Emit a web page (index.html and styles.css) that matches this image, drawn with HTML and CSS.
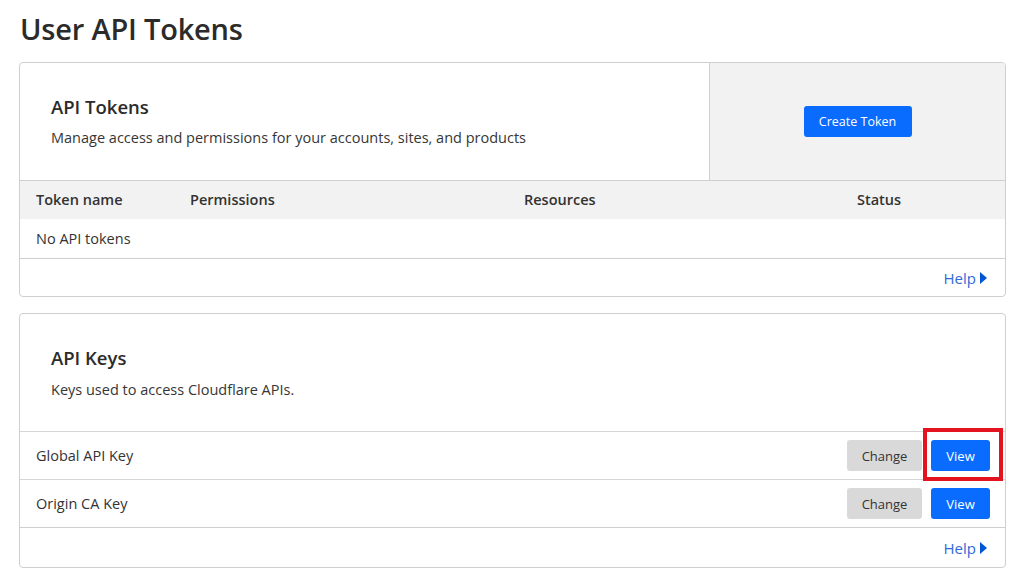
FILE: index.html
```html
<!DOCTYPE html>
<html lang="en">
<head>
<meta charset="utf-8">
<title>User API Tokens</title>
<link rel="stylesheet" href="styles.css">
</head>
<body>
<main class="page">
  <h1 class="page-title">User API Tokens</h1>

  <section class="card">
    <div class="card-top">
      <div class="card-intro">
        <h2 class="card-title">API Tokens</h2>
        <p class="card-desc">Manage access and permissions for your accounts, sites, and products</p>
      </div>
      <div class="card-action">
        <button class="btn btn-primary btn-create">Create Token</button>
      </div>
    </div>
    <div class="table-head">
      <span>Token name</span>
      <span>Permissions</span>
      <span>Resources</span>
      <span>Status</span>
    </div>
    <div class="table-empty">No API tokens</div>
    <div class="card-foot">
      <a class="help-link" href="#">Help<svg class="help-arrow" width="7" height="12" viewBox="0 0 7 12"><path d="M0 0 L7 6 L0 12 Z" fill="#0055d4"/></svg></a>
    </div>
  </section>

  <section class="card card-keys">
    <div class="card-top">
      <div class="card-intro">
        <h2 class="card-title">API Keys</h2>
        <p class="card-desc">Keys used to access Cloudflare APIs.</p>
      </div>
    </div>
    <div class="key-row">
      <span class="key-name">Global API Key</span>
      <div class="key-actions">
        <button class="btn btn-secondary">Change</button>
        <span class="highlight-wrap">
          <button class="btn btn-primary btn-view">View</button>
          <span class="highlight"></span>
        </span>
      </div>
    </div>
    <div class="key-row">
      <span class="key-name">Origin CA Key</span>
      <div class="key-actions">
        <button class="btn btn-secondary">Change</button>
        <button class="btn btn-primary btn-view">View</button>
      </div>
    </div>
    <div class="card-foot card-foot-keys">
      <a class="help-link" href="#">Help<svg class="help-arrow" width="7" height="12" viewBox="0 0 7 12"><path d="M0 0 L7 6 L0 12 Z" fill="#0055d4"/></svg></a>
    </div>
  </section>
</main>
</body>
</html>
```

FILE: styles.css
```css
* { box-sizing: border-box; }

html, body {
  margin: 0;
  padding: 0;
  background: #ffffff;
}

body {
  font-family: "Open Sans", "Noto Sans", "Liberation Sans", sans-serif;
  color: #333333;
  width: 1024px;
  height: 587px;
  overflow: hidden;
}

.page {
  padding: 8px 18px 0 19px;
}

.page-title {
  margin: 0 0 13px 1px;
  font-size: 29px;
  font-weight: 600;
  line-height: 41px;
  color: #2b2b2b;
  letter-spacing: -0.2px;
}

.card {
  width: 987px;
  border: 1px solid #cfcfcf;
  border-radius: 4px;
  background: #fff;
  overflow: hidden;
}

.card-keys {
  margin-top: 16px;
}

.card-top {
  display: flex;
  height: 117px;
}

.card-intro {
  flex: 1;
  padding: 31px 0 0 31px;
}

.card-title {
  margin: 0;
  font-size: 18.5px;
  font-weight: 600;
  line-height: 26px;
  color: #2b2b2b;
}

.card-desc {
  margin: 7px 0 0;
  font-size: 14.5px;
  line-height: 22px;
  color: #363636;
}

.card-keys .card-desc {
  margin-top: 8px;
}

.card-action {
  width: 296px;
  background: #f2f2f2;
  border-left: 1px solid #cfcfcf;
  display: flex;
  align-items: center;
  justify-content: center;
}

.btn {
  font-family: inherit;
  font-size: 13px;
  border: none;
  border-radius: 3px;
  height: 31px;
  cursor: pointer;
  padding: 0;
  white-space: nowrap;
}

.btn-primary {
  background: #0a6cff;
  color: #ffffff;
}

.btn-secondary {
  background: #d9d9d9;
  color: #333333;
  width: 75px;
}

.btn-create {
  width: 108px;
  margin-top: -1px;
  font-size: 12.5px;
}

.btn-view {
  width: 59px;
}

.table-head {
  display: grid;
  grid-template-columns: 154px 334px 333px 1fr;
  align-items: center;
  height: 39px;
  padding-left: 16px;
  padding-bottom: 1px;
  background: #f2f2f2;
  border-top: 1px solid #cfcfcf;
  font-size: 14.5px;
  font-weight: 600;
  color: #333;
}

.table-empty {
  height: 39px;
  display: flex;
  align-items: center;
  padding-left: 16px;
  font-size: 14.5px;
  color: #333;
}

.card-foot {
  height: 38px;
  border-top: 1px solid #cfcfcf;
  display: flex;
  align-items: center;
  justify-content: flex-end;
  padding-right: 18px;
}

.card-foot-keys {
  height: 40px;
}

.help-link {
  display: flex;
  align-items: center;
  gap: 4px;
  font-size: 15px;
  color: #2f6ad6;
  text-decoration: none;
}

.help-arrow {
  display: block;
}

.key-row {
  height: 48px;
  border-top: 1px solid #d6d6d6;
  display: flex;
  align-items: center;
  justify-content: space-between;
  padding: 0 15px 0 16px;
}

.key-name {
  font-size: 14.5px;
  color: #333;
}

.key-actions {
  display: flex;
  align-items: center;
  gap: 9px;
}

.highlight-wrap {
  position: relative;
  display: inline-flex;
}

.highlight {
  position: absolute;
  left: -8px;
  right: -13px;
  top: -12px;
  bottom: -10px;
  border: 4px solid #e3141f;
  pointer-events: none;
}
```
